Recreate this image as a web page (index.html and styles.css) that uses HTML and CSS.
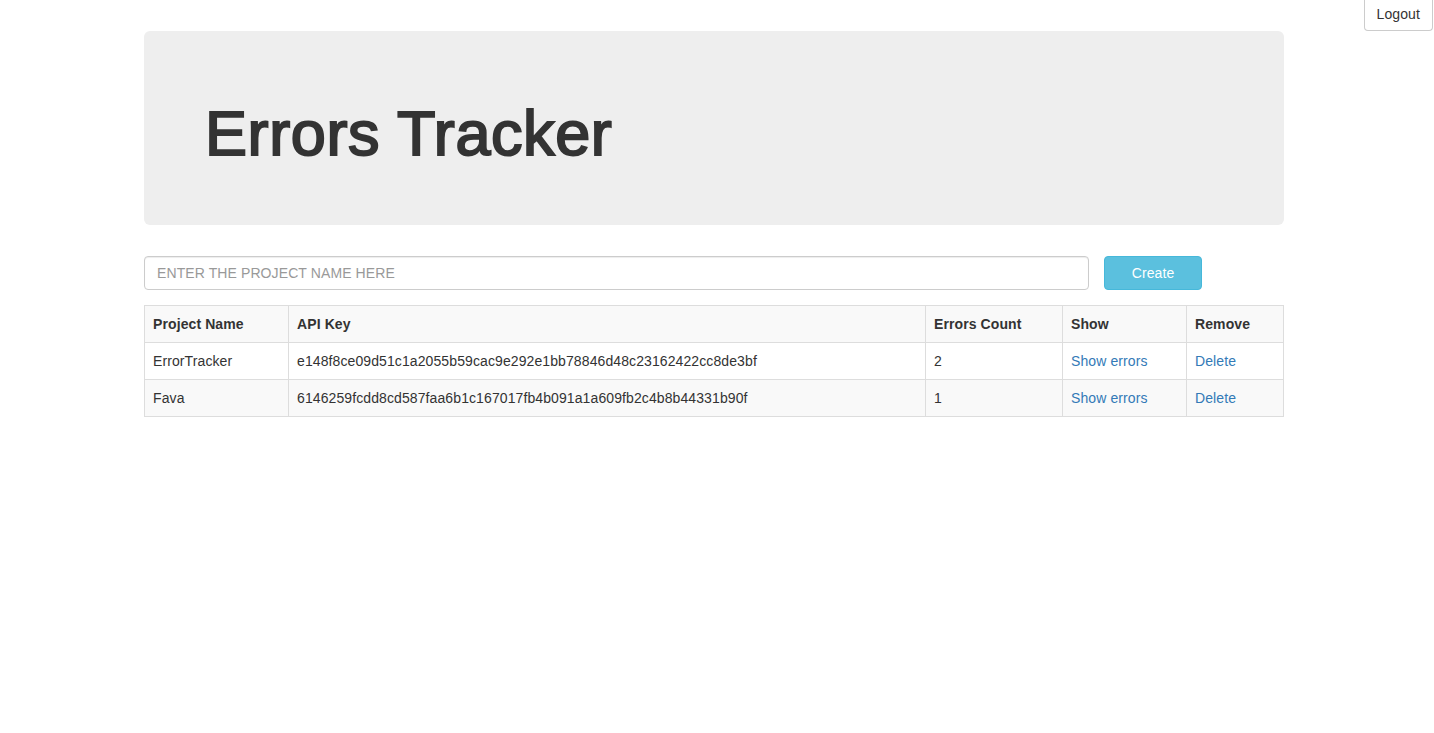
FILE: index.html
```html
<!DOCTYPE html>
<html>
<head>
<meta charset="utf-8">
<title>Errors Tracker</title>
<link rel="stylesheet" href="styles.css">
</head>
<body>
<div class="topbar">
  <button class="btn btn-default">Logout</button>
</div>
<div class="container">
  <div class="jumbotron">
    <h1>Errors Tracker</h1>
  </div>
  <div class="create-row">
    <input class="form-control" type="text" placeholder="ENTER THE PROJECT NAME HERE">
    <button class="btn btn-info">Create</button>
  </div>
  <table class="table">
    <tbody>
      <tr>
        <th class="c1">Project Name</th>
        <th class="c2">API Key</th>
        <th class="c3">Errors Count</th>
        <th class="c4">Show</th>
        <th class="c5">Remove</th>
      </tr>
      <tr>
        <td>ErrorTracker</td>
        <td>e148f8ce09d51c1a2055b59cac9e292e1bb78846d48c23162422cc8de3bf</td>
        <td>2</td>
        <td><a href="#">Show errors</a></td>
        <td><a href="#">Delete</a></td>
      </tr>
      <tr>
        <td>Fava</td>
        <td>6146259fcdd8cd587faa6b1c167017fb4b091a1a609fb2c4b8b44331b90f</td>
        <td>1</td>
        <td><a href="#">Show errors</a></td>
        <td><a href="#">Delete</a></td>
      </tr>
    </tbody>
  </table>
</div>
</body>
</html>
```

FILE: styles.css
```css
* { box-sizing: border-box; }
html, body {
  margin: 0;
  padding: 0;
  background: #fff;
}
body {
  font-family: "Liberation Sans", Arial, Helvetica, sans-serif;
  font-size: 14px;
  line-height: 20px;
  color: #333;
  letter-spacing: 0.1px;
}
.topbar {
  display: flex;
  justify-content: flex-end;
  height: 31px;
  padding-right: 1px;
}
.btn {
  font-family: inherit;
  font-size: 14px;
  line-height: 20px;
  padding: 6px 12px;
  border-radius: 4px;
  border: 1px solid transparent;
  cursor: pointer;
  letter-spacing: 0.1px;
}
.btn-default {
  background: #fff;
  border-color: #ccc;
  color: #333;
  height: 31px;
  padding: 4px 12px 6px;
  border-top-left-radius: 0;
  border-top-right-radius: 0;
  border-top: none;
}
.btn-info {
  background: #5bc0de;
  border-color: #46b8da;
  color: #fff;
  width: 98px;
  height: 34px;
}
.container {
  width: 1140px;
  margin-left: 144px;
}
.jumbotron {
  background: #eee;
  border-radius: 6px;
  padding: 48px 60px 48px 61px;
  margin-bottom: 31px;
}
.jumbotron h1 {
  margin: 20px 0 9px;
  font-size: 63px;
  line-height: 69px;
  font-weight: 400;
  color: #333;
  letter-spacing: 0.6px;
  -webkit-text-stroke: 2px #333;
}
.create-row {
  display: flex;
  gap: 15px;
  margin-bottom: 15px;
}
.form-control {
  width: 945px;
  height: 34px;
  padding: 6px 12px;
  font-family: inherit;
  font-size: 14px;
  color: #555;
  border: 1px solid #ccc;
  border-radius: 4px;
  box-shadow: inset 0 1px 1px rgba(0,0,0,0.075);
  outline: none;
  letter-spacing: 0.1px;
}
.form-control::placeholder { color: #999; }
.table {
  width: 1140px;
  border-collapse: collapse;
  border: 1px solid #ddd;
}
.table th, .table td {
  border: 1px solid #ddd;
  padding: 8px;
  text-align: left;
  vertical-align: top;
  line-height: 20px;
}
.table th { font-weight: bold; }
.table tr:nth-child(odd) { background: #f9f9f9; }
.c1 { width: 144px; }
.c2 { width: 637px; }
.c3 { width: 137px; }
.c4 { width: 124px; }
a { color: #337ab7; text-decoration: none; }
```
